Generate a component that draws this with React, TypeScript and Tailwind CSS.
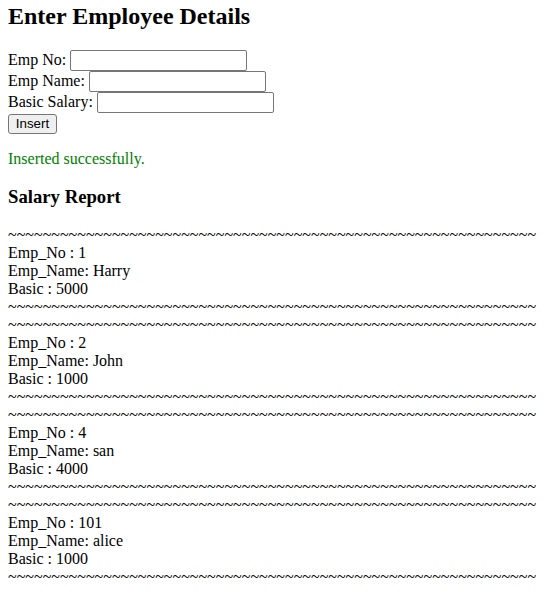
import React from "react";

const records = [
  { no: "1", name: "Harry", basic: "5000" },
  { no: "2", name: "John", basic: "1000" },
  { no: "4", name: "san", basic: "4000" },
  { no: "101", name: "alice", basic: "1000" },
];

const tildes = "~".repeat(61);

function Field({ label }: { label: string }) {
  return (
    <div className="flex h-[21px] items-center gap-[4px]">
      <span className="leading-[18px]">{label}</span>
      <input
        type="text"
        className="box-border h-[21px] w-[177px] rounded-[2px] border border-[#767676] bg-white px-[2px] text-[13.33px] [font-family:'Liberation_Sans',Arial,sans-serif]"
      />
    </div>
  );
}

export default function App() {
  return (
    <div className="min-h-[591px] bg-white px-2 pt-[1.5px] text-[16px] text-black [font-family:'Liberation_Serif','Times_New_Roman',serif]">
      <h2 className="mb-[20px] text-[24px] font-bold leading-[28px]">Enter Employee Details</h2>
      <form onSubmit={(e) => e.preventDefault()}>
        <Field label="Emp No:" />
        <Field label="Emp Name:" />
        <Field label="Basic Salary:" />
        <button
          type="submit"
          className="mt-[1px] box-border flex h-[20px] w-[49px] items-center justify-center rounded-[3px] border border-[#767676] bg-[#efefef] text-[13.33px] leading-none text-black [font-family:'Liberation_Sans',Arial,sans-serif]"
        >
          Insert
        </button>
      </form>
      <p className="mt-[16px] leading-[18px] text-[#008000]">Inserted successfully.</p>
      <h3 className="mt-[18.72px] text-[18.72px] font-bold leading-[21.5px]">Salary Report</h3>
      <div className="mt-[18.5px] leading-[18px]">
        {records.map((r) => (
          <div key={r.no}>
            <div className="whitespace-nowrap">{tildes}</div>
            <div>Emp_No : {r.no}</div>
            <div>Emp_Name: {r.name}</div>
            <div>Basic : {r.basic}</div>
            <div className="whitespace-nowrap">{tildes}</div>
          </div>
        ))}
      </div>
    </div>
  );
}
